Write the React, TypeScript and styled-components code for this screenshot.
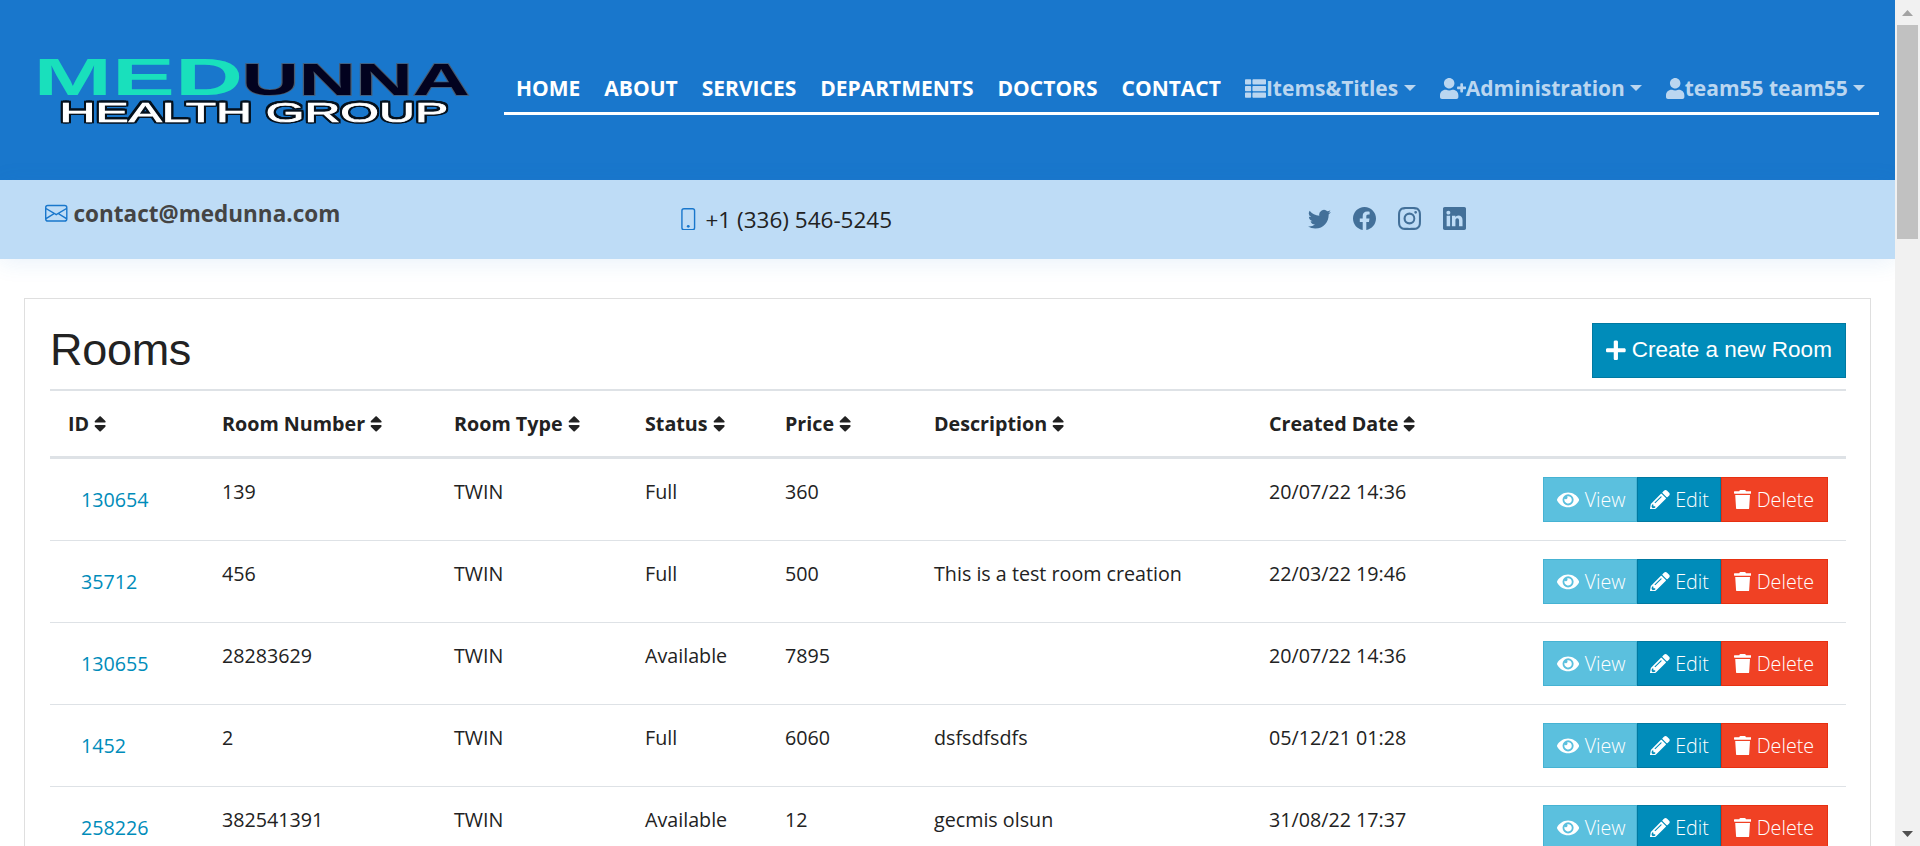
import React from "react";
import styled, { createGlobalStyle } from "styled-components";
import { FaEye, FaPencilAlt, FaPlus, FaSort, FaThList, FaTrash, FaUser, FaUserPlus } from "react-icons/fa";
import { BsEnvelope, BsFacebook, BsInstagram, BsLinkedin, BsPhone, BsTwitter } from "react-icons/bs";

const GlobalStyle = createGlobalStyle`
  *, *::before, *::after { box-sizing: border-box; }
  html, body { margin: 0; height: 846px; overflow: hidden; background: #fff; }
  body { font-family: "Open Sans", "Liberation Sans", sans-serif; font-size: 19.69px; color: #222; }
  svg { flex: none; display: block; }
`;

const Shell = styled.div`
  display: flex;
  height: 846px;
  overflow: hidden;
`;

const Page = styled.div`
  width: 1895px;
  height: 846px;
  overflow: hidden;
`;

const Header = styled.header`
  display: flex;
  align-items: center;
  height: 180px;
  padding: 0 16px 0 30px;
  background: #1977cc;
`;

const Logo = styled.svg`
  width: 450px;
  height: 90px;
  margin-right: 24px;
`;

const Tagline = styled.text`
  fill: #fff;
  stroke: #fff;
  stroke-width: 0.7px;
  font-size: 27.5px;
  font-weight: 400;
  filter: drop-shadow(2px 0 0 #04101c) drop-shadow(-2px 0 0 #04101c)
    drop-shadow(0 1.6px 0 #04101c) drop-shadow(0 -1.4px 0 #04101c);
`;

/* Icon glyphs that are wider or narrower than their em square. */
const UserPlusIcon = styled(FaUserPlus)`
  width: 1.25em;
`;
const UserIcon = styled(FaUser)`
  width: 0.875em;
`;
const PlusIcon = styled(FaPlus)`
  width: 0.875em;
`;
const SortIcon = styled(FaSort)`
  width: 0.625em;
`;
const EyeIcon = styled(FaEye)`
  width: 1.125em;
`;
const TrashIcon = styled(FaTrash)`
  width: 0.875em;
`;

const Nav = styled.nav`
  display: flex;
  width: 1375px;
  margin-bottom: 1px;
  border-bottom: 3px solid #fff;
`;

const NavLink = styled.a<{ $muted?: boolean }>`
  display: flex;
  align-items: center;
  height: 48px;
  padding: 0 12px;
  font-size: 21px;
  font-weight: 700;
  white-space: nowrap;
  color: ${(p) => (p.$muted ? "#bad6f0" : "#fff")};
`;

const Caret = styled.span`
  margin-left: 5.4px;
  border-top: 6.3px solid;
  border-left: 6.3px solid transparent;
  border-right: 6.3px solid transparent;
`;

const ContactBar = styled.div`
  display: flex;
  height: 79px;
  background: #bedcf6;
  padding-left: 45px;
  font-size: 22.5px;
  box-shadow: 0 3px 22px rgba(25, 119, 204, 0.1);
`;

const Contact = styled.div<{ $top: number; $width: number; $strong?: boolean }>`
  display: flex;
  align-items: center;
  gap: 6px;
  width: ${(p) => p.$width}px;
  height: 34px;
  margin-top: ${(p) => p.$top}px;
  font-weight: ${(p) => (p.$strong ? 700 : 400)};
  color: ${(p) => (p.$strong ? "#444" : "#222")};
  svg { color: #1977cc; }
`;

const Socials = styled.div`
  display: flex;
  gap: 22px;
  margin-top: 27px;
  color: #437099;
`;

const Card = styled.main`
  width: 1847px;
  height: 1000px;
  margin: 39px 0 0 24px;
  padding: 24px 24px 0 25px;
  border: 1px solid #dfdfdf;
`;

const TitleRow = styled.div`
  display: flex;
  align-items: center;
  justify-content: space-between;
  height: 55px;
  margin-bottom: 11px;
`;

const Title = styled.h2`
  margin: 0 0 2px;
  font: 400 45px/53px "Liberation Sans", Arial, sans-serif;
  letter-spacing: -0.3px;
`;

const CreateButton = styled.button`
  display: flex;
  align-items: center;
  justify-content: center;
  gap: 6px;
  width: 254px;
  height: 55px;
  padding: 0 0 1px;
  border: 1px solid #0079a1;
  background: #008cba;
  color: #fff;
  font: 400 22.5px "Liberation Sans", Arial, sans-serif;
`;

const columns = "154px 232px 191px 140px 149px 335px 1fr";

const HeadRow = styled.div`
  display: grid;
  grid-template-columns: ${columns};
  align-items: center;
  height: 70px;
  border-top: 2px solid #dee2e6;
  border-bottom: 3px solid #dee2e6;
  font-weight: 700;
`;

const HeadCell = styled.div`
  display: flex;
  align-items: center;
  gap: 5px;
  padding-left: 18px;
  white-space: nowrap;
`;

const Row = styled.div`
  display: grid;
  grid-template-columns: ${columns};
  height: 82px;
  padding-top: 18px;
  border-bottom: 1px solid #dee2e6;
`;

const Cell = styled.div`
  padding-left: 18px;
  line-height: 29px;
  white-space: nowrap;
`;

const IdLink = styled.a`
  padding-left: 31px;
  line-height: 46px;
  color: #008cba;
  font-weight: 400;
`;

const DateAndActions = styled.div`
  display: flex;
  justify-content: space-between;
`;

const Actions = styled.div`
  display: flex;
  justify-content: flex-end;
  padding-right: 18px;
`;

const tones = {
  info: ["#5bc0de", "#46b3d3"],
  primary: ["#008cba", "#0079a1"],
  danger: ["#f04124", "#e63011"],
};

const ActionButton = styled.button<{ $tone: keyof typeof tones; $width: number }>`
  display: flex;
  align-items: center;
  gap: 5.5px;
  width: ${(p) => p.$width}px;
  height: 45px;
  padding: 0 0 0 ${(p) => (p.$tone === "info" ? 13 : 12)}px;
  border: 1px solid ${(p) => tones[p.$tone][1]};
  background: ${(p) => tones[p.$tone][0]};
  color: #fff;
  font: 300 19.69px "Open Sans", sans-serif;
`;

const Scrollbar = styled.div`
  display: flex;
  flex-direction: column;
  align-items: center;
  width: 25px;
  height: 846px;
  background: #f1f1f1;
`;

const Arrow = styled.svg`
  width: 11px;
  height: 6px;
  margin: 10px 0 9px;
`;

const Thumb = styled.div`
  width: 21px;
  height: 214px;
  margin-bottom: auto;
  background: #c1c1c1;
`;

const sections = ["HOME", "ABOUT", "SERVICES", "DEPARTMENTS", "DOCTORS", "CONTACT"];
const headings = ["ID", "Room Number", "Room Type", "Status", "Price", "Description", "Created Date"];
const rooms = [
  ["130654", "139", "TWIN", "Full", "360", "", "20/07/22 14:36"],
  ["35712", "456", "TWIN", "Full", "500", "This is a test room creation", "22/03/22 19:46"],
  ["130655", "28283629", "TWIN", "Available", "7895", "", "20/07/22 14:36"],
  ["1452", "2", "TWIN", "Full", "6060", "dsfsdfsdfs", "05/12/21 01:28"],
  ["258226", "382541391", "TWIN", "Available", "12", "gecmis olsun", "31/08/22 17:37"],
];

export default function App() {
  return (
    <Shell>
      <GlobalStyle />
      <Page>
        <Header>
          <Logo viewBox="30 45 450 90" fontFamily="Liberation Sans, Arial, sans-serif" fontWeight="700">
            <text x="33.6" y="95" fontSize="52" textLength="209.5" lengthAdjust="spacingAndGlyphs" fill="#19e0bc">MED</text>
            <text x="241.7" y="94.5" fontSize="44.5" textLength="228" lengthAdjust="spacingAndGlyphs" fill="#02021f" stroke="#4b5a6c" strokeWidth="1.4" paintOrder="stroke">UNNA</text>
            <Tagline x="59.6" y="122.4" textLength="388.5" lengthAdjust="spacingAndGlyphs">HEALTH GROUP</Tagline>
          </Logo>
          <Nav>
            {sections.map((s) => <NavLink key={s}>{s}</NavLink>)}
            <NavLink $muted><FaThList />Items&amp;Titles<Caret /></NavLink>
            <NavLink $muted><UserPlusIcon />Administration<Caret /></NavLink>
            <NavLink $muted><UserIcon />team55 team55<Caret /></NavLink>
          </Nav>
        </Header>
        <ContactBar>
          <Contact $top={16} $width={632} $strong><BsEnvelope size={22.5} />contact@medunna.com</Contact>
          <Contact $top={22} $width={631}><BsPhone size={22.5} />+1 (336) 546-5245</Contact>
          <Socials>
            <BsTwitter size={23} />
            <BsFacebook size={23} />
            <BsInstagram size={23} />
            <BsLinkedin size={23} />
          </Socials>
        </ContactBar>
        <Card>
          <TitleRow>
            <Title>Rooms</Title>
            <CreateButton><PlusIcon />Create a new Room</CreateButton>
          </TitleRow>
          <HeadRow>
            {headings.map((h) => <HeadCell key={h}>{h}<SortIcon /></HeadCell>)}
          </HeadRow>
          {rooms.map(([id, ...cells]) => (
            <Row key={id}>
              <IdLink>{id}</IdLink>
              {cells.slice(0, 5).map((c, i) => <Cell key={i}>{c}</Cell>)}
              <DateAndActions>
                <Cell>{cells[5]}</Cell>
                <Actions>
                  <ActionButton $tone="info" $width={94}><EyeIcon />View</ActionButton>
                  <ActionButton $tone="primary" $width={84}><FaPencilAlt />Edit</ActionButton>
                  <ActionButton $tone="danger" $width={107}><TrashIcon />Delete</ActionButton>
                </Actions>
              </DateAndActions>
            </Row>
          ))}
        </Card>
      </Page>
      <Scrollbar>
        <Arrow viewBox="0 0 11 6"><path d="M0 6 5.5 0 11 6z" fill="#a3a3a3" /></Arrow>
        <Thumb />
        <Arrow viewBox="0 0 11 6"><path d="M0 0h11L5.5 6z" fill="#505050" /></Arrow>
      </Scrollbar>
    </Shell>
  );
}
